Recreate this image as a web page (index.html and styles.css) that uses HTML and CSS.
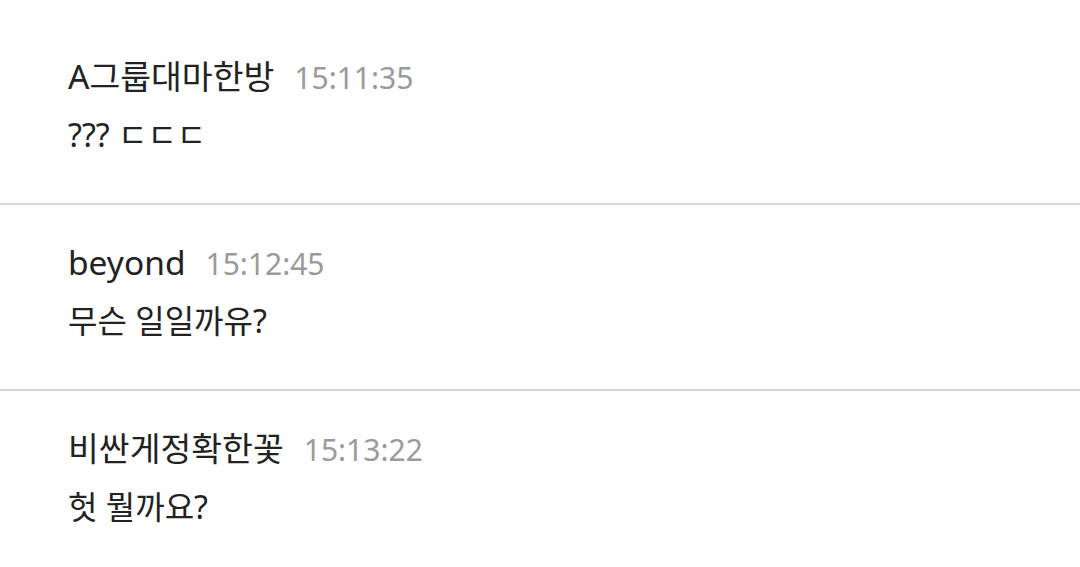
FILE: index.html
```html
<!DOCTYPE html>
<html lang="ko">
<head>
<meta charset="utf-8">
<link rel="stylesheet" href="styles.css">
</head>
<body>
<div class="list">
  <div class="item first">
    <div class="head"><span class="name">A그룹대마한방</span><span class="time">15:11:35</span></div>
    <div class="msg">??? ㄷㄷㄷ</div>
  </div>
  <div class="item">
    <div class="head"><span class="name">beyond</span><span class="time">15:12:45</span></div>
    <div class="msg">무슨 일일까유?</div>
  </div>
  <div class="item last">
    <div class="head"><span class="name">비싼게정확한꽃</span><span class="time">15:13:22</span></div>
    <div class="msg">헛 뭘까요?</div>
  </div>
</div>
</body>
</html>
```

FILE: styles.css
```css
html, body {
  margin: 0;
  padding: 0;
  background: #ffffff;
}
body {
  font-family: "Noto Sans", "Noto Sans CJK KR", sans-serif;
  color: #222222;
  overflow: hidden;
}
.list {
  padding-top: 19px;
}
.item {
  height: 186px;
  box-sizing: border-box;
  padding: 35px 0 0 68px;
  border-bottom: 2px solid #d6d6d6;
}
.item.last {
  border-bottom: none;
}
.head {
  display: flex;
  align-items: baseline;
  gap: 20px;
  height: 44px;
  line-height: 44px;
}
.name {
  font-size: 33.5px;
  color: #222222;
}
.time {
  font-size: 30px;
  color: #9a9a9a;
}
.msg {
  margin-top: 15px;
  font-size: 32px;
  line-height: 44px;
  color: #222222;
}
```
